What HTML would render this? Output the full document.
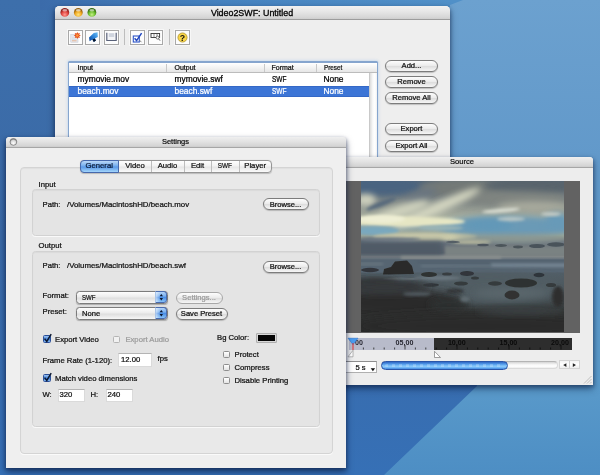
<!DOCTYPE html>
<html><head><meta charset="utf-8"><title>Video2SWF</title>
<style>
html,body{margin:0;padding:0;}
body{width:600px;height:475px;overflow:hidden;position:relative;background:#3a6aa8;font-family:"Liberation Sans",sans-serif;font-size:7.7px;color:#111;}
#stage{position:absolute;left:0;top:0;width:600px;height:475px;overflow:hidden;will-change:transform;}
#stage div,#stage span,#stage svg{position:absolute;}
.t{white-space:pre;line-height:10px;height:10px;-webkit-text-stroke:0.24px currentColor;}
.win{background:#eeeeee;}
.btn{height:10.1px;border:0.8px solid #7c7c7c;border-radius:6px;background:linear-gradient(#fdfdfd 0%,#ececec 45%,#dedede 55%,#f6f6f6 100%);box-shadow:0 0.8px 1px rgba(0,0,0,.25);}
.btn span{-webkit-text-stroke:0.24px currentColor;left:0;right:0;text-align:center;top:0;line-height:10.100px;font-size:7.6px;white-space:pre;}
.field{background:#fff;border:1px solid #dadada;border-top-color:#b4b4b4;box-sizing:border-box;}
.cb{width:7px;height:7px;border:0.8px solid #8e8e8e;border-radius:1.5px;background:linear-gradient(#fff,#e4e4e4);box-sizing:border-box;}
.cbon{width:8px;height:8px;border:0.8px solid #2a4f9a;border-radius:1.5px;background:linear-gradient(#9cc4f3,#3f7fd8 55%,#7fb4ef);box-sizing:border-box;}
.grp{background:#e4e4e4;border:1px solid #d2d2d2;border-radius:3.5px;box-sizing:border-box;box-shadow:0 1px 0 rgba(255,255,255,.7), inset 0 1px 1px rgba(0,0,0,.04);}
.ib{width:15px;height:15px;background:#fdfdfd;border:1px solid #a8a8a8;box-sizing:border-box;box-shadow:0 0 0 1px rgba(255,255,255,.5);}
</style></head><body>
<div id="stage">
<!-- BACKGROUND -->
<svg id="bg" width="600" height="475" viewBox="0 0 600 475" style="left:0;top:0">
<defs>
<linearGradient id="bgR" x1="0" y1="0" x2="0" y2="1"><stop offset="0" stop-color="#6ca1cf"/><stop offset="0.33" stop-color="#6299ca"/><stop offset="0.8" stop-color="#5a9aca"/><stop offset="1" stop-color="#4d8ec4"/></linearGradient>
<linearGradient id="bgL" x1="0" y1="0" x2="0" y2="1"><stop offset="0" stop-color="#3d6fab"/><stop offset="0.5" stop-color="#3a69a6"/><stop offset="1" stop-color="#3670b6"/></linearGradient>
<linearGradient id="bgT" x1="40" y1="0" x2="450" y2="0" gradientUnits="userSpaceOnUse"><stop offset="0" stop-color="#3b6baa"/><stop offset="0.4" stop-color="#4581be"/><stop offset="1" stop-color="#5090c8"/></linearGradient>
</defs>
<rect width="600" height="475" fill="url(#bgL)"/>
<polygon points="40,0 464,0 452,10 40,10" fill="url(#bgT)"/>
<polygon points="463,0 600,0 600,475 384,475 477,386 450,157 450,5" fill="url(#bgR)"/>
</svg>
<!-- MAIN WINDOW -->
<div id="mainwin" class="win" style="left:54.5px;top:6px;width:395px;height:170px;border-radius:4.5px 4.5px 0 0;box-shadow:0 4px 7px 0 rgba(10,25,60,.5),0 1.500px 3.500px .5px rgba(10,25,60,.3);">
  <div style="left:0;top:0;width:395px;height:12.5px;border-radius:4.5px 4.5px 0 0;background:linear-gradient(#f1f1f1 0%,#e7e7e7 40%,#d7d7d7 85%,#cdcdcd 100%);border-bottom:1px solid #9c9c9c;"></div>
  <svg width="50" height="14" viewBox="0 0 50 14" style="left:0;top:0">
    <defs>
      <radialGradient id="tr" cx="0.5" cy="0.75" r="0.6"><stop offset="0" stop-color="#ff9a90"/><stop offset="0.6" stop-color="#e0443e"/><stop offset="1" stop-color="#8e1f1c"/></radialGradient>
      <radialGradient id="ty" cx="0.5" cy="0.75" r="0.6"><stop offset="0" stop-color="#ffe27a"/><stop offset="0.6" stop-color="#f0a81e"/><stop offset="1" stop-color="#96600c"/></radialGradient>
      <radialGradient id="tg" cx="0.5" cy="0.75" r="0.6"><stop offset="0" stop-color="#c6f08a"/><stop offset="0.6" stop-color="#6cbf2c"/><stop offset="1" stop-color="#356d12"/></radialGradient>
    </defs>
    <circle cx="9.8" cy="6.4" r="4.4" fill="url(#tr)"/><ellipse cx="9.8" cy="4.3" rx="2.4" ry="1.3" fill="#fff" opacity=".55"/>
    <circle cx="23.3" cy="6.4" r="4.4" fill="url(#ty)"/><ellipse cx="23.3" cy="4.3" rx="2.4" ry="1.3" fill="#fff" opacity=".6"/>
    <circle cx="36.9" cy="6.4" r="4.4" fill="url(#tg)"/><ellipse cx="36.9" cy="4.3" rx="2.4" ry="1.3" fill="#fff" opacity=".55"/>
  </svg>
  <span class="t" style="left:97.5px;width:200px;text-align:center;top:1.5px;font-size:8.9px;color:#000;-webkit-text-stroke:0.3px #000;">Video2SWF: Untitled</span>

  <!-- toolbar -->
  <div class="ib" style="left:13.2px;top:23.7px;">
    <svg width="13" height="13" viewBox="0 0 13 13" style="left:0;top:0"><rect x="1.800" y="3.400" width="7.200" height="7.800" fill="#e4e7ee" stroke="#c2c6d0" stroke-width=".5"/><path d="M3 9.800h4.600" stroke="#e9a070" stroke-width=".7"/><path d="M3 8.300h4.600M3 6.800h2.500" stroke="#cdd0d8" stroke-width=".5"/><path d="M8.300 0.900l.8 1.700 1.800-.7-.7 1.800 1.700.8-1.700.8.700 1.800-1.800-.7-.8 1.700-.8-1.700-1.800.7.700-1.800-1.700-.8 1.700-.8-.7-1.800 1.800.7z" fill="#e6501a"/><circle cx="8.300" cy="4.500" r="1.300" fill="#ff9a3c"/></svg>
  </div>
  <div class="ib" style="left:30.6px;top:23.7px;">
    <svg width="13" height="13" viewBox="0 0 13 13" style="left:0;top:0"><defs><linearGradient id="ar" x1="1" y1="0" x2="0" y2="1"><stop offset="0" stop-color="#6cc0f6"/><stop offset=".5" stop-color="#2a80d6"/><stop offset="1" stop-color="#0e3f8c"/></linearGradient></defs><path d="M11.600 1.300 L7.800 2 L3 6.400 L3.600 10.200 L6.400 8.600 L7.800 11 L10 9.600 L8.800 7.400 L11.800 6 Z" fill="url(#ar)"/><path d="M6.400 8.600 L7.800 11 L10 9.600 L8.800 7.400 Z" fill="#08152c"/></svg>
  </div>
  <div class="ib" style="left:49.200px;top:23.7px;">
    <svg width="13" height="13" viewBox="0 0 13 13" style="left:0;top:0"><rect x="1.600" y="2" width="9.800" height="8" fill="#f3f4f7"/><rect x="3.800" y="2.200" width="5.400" height="3.800" fill="#cfd4de"/><path d="M1.800 1.800v7.700h9.400v-7.700" fill="none" stroke="#596179" stroke-width="1.150"/></svg>
  </div>
  <div style="left:69.5px;top:23.2px;width:1px;height:16px;background:#bdbdbd;"></div>
  <div class="ib" style="left:75.6px;top:23.7px;">
    <svg width="13" height="13" viewBox="0 0 13 13" style="left:0;top:0"><rect x="2.3" y="5" width="6" height="6" fill="#fff" stroke="#2c55c8" stroke-width="1.1"/><path d="M3.6 7.2 L5.6 9.6 L10.6 2.2" fill="none" stroke="#2348c0" stroke-width="1.5"/><path d="M8.6 9.2 L10.4 11.2" stroke="#777" stroke-width=".9"/></svg>
  </div>
  <div class="ib" style="left:93.6px;top:23.7px;">
    <svg width="13" height="13" viewBox="0 0 13 13" style="left:0;top:0"><rect x="2" y="2.5" width="8.6" height="4" fill="#fff" stroke="#333" stroke-width=".9"/><path d="M5 2.5v4M8 2.5v4" stroke="#555" stroke-width=".7"/><circle cx="8.6" cy="6.6" r="1.5" fill="#fff" stroke="#444" stroke-width=".7"/><path d="M9.6 7.8 L11 9.6" stroke="#444" stroke-width=".9"/></svg>
  </div>
  <div style="left:114.5px;top:23.2px;width:1px;height:16px;background:#bdbdbd;"></div>
  <div class="ib" style="left:120.6px;top:23.7px;">
    <svg width="13" height="13" viewBox="0 0 13 13" style="left:0;top:0"><circle cx="6.5" cy="6.5" r="4.6" fill="#f8d548" stroke="#a8881c" stroke-width=".7"/><text x="6.5" y="9.700" text-anchor="middle" font-family="Liberation Sans, sans-serif" font-weight="bold" font-size="8.8" fill="#111">?</text></svg>
  </div>

  <!-- list -->
  <div style="left:13.2px;top:55.400px;width:310.800px;height:120px;border-radius:1.5px;background:#86a5ce;box-shadow:0 0 2.5px 1px rgba(160,195,235,.4);"></div>
  <div style="left:14.5px;top:56.700px;width:308.200px;height:118px;background:#fff;"></div>
  <div style="left:14.5px;top:56.700px;width:308.200px;height:9.300px;background:linear-gradient(#ffffff,#f3f3f3 50%,#e6e6e6);border-bottom:1px solid #bcbcbc;"></div>
  <div style="left:111.5px;top:57.500px;width:1px;height:8.500px;background:#c8c8c8;"></div>
  <div style="left:209.600px;top:57.500px;width:1px;height:8.500px;background:#c8c8c8;"></div>
  <div style="left:261px;top:57.500px;width:1px;height:8.500px;background:#c8c8c8;"></div>
  <span class="t" style="left:23px;top:56.8px;font-size:7px;">Input</span>
  <span class="t" style="left:120px;top:56.8px;font-size:7px;">Output</span>
  <span class="t" style="left:217px;top:56.8px;font-size:7px;">Format</span>
  <span class="t" style="left:269px;top:56.8px;font-size:7px;transform:scaleX(.9);transform-origin:0 50%;">Preset</span>
  <!-- scrollbar -->
  <div style="left:314px;top:67px;width:8.700px;height:108px;background:linear-gradient(90deg,#dcdcdc,#f8f8f8 40%,#ffffff 70%,#f0f0f0);border-left:1px solid #c9c9c9;box-sizing:border-box;"></div>
  <!-- rows -->
  <span class="t" style="left:23px;top:68.3px;font-size:8.4px;color:#000;">mymovie.mov</span>
  <span class="t" style="left:120px;top:68.3px;font-size:8.4px;color:#000;">mymovie.swf</span>
  <span class="t" style="left:217px;top:68.3px;font-size:8.4px;color:#000;transform:scaleX(.78);transform-origin:0 50%;">SWF</span>
  <span class="t" style="left:269px;top:68.3px;font-size:8.4px;color:#000;">None</span>
  <div style="left:14.5px;top:79.8px;width:299.500px;height:11.400px;background:#3c75d6;box-shadow:inset 0 1px 0 #3468c6,inset 0 -1px 0 #3468c6;"></div>
  <span class="t" style="left:23px;top:80.3px;font-size:8.4px;color:#fff;">beach.mov</span>
  <span class="t" style="left:120px;top:80.3px;font-size:8.4px;color:#fff;">beach.swf</span>
  <span class="t" style="left:217px;top:80.3px;font-size:8.4px;color:#fff;transform:scaleX(.78);transform-origin:0 50%;">SWF</span>
  <span class="t" style="left:269px;top:80.3px;font-size:8.4px;color:#fff;">None</span>

  <!-- buttons -->
  <div class="btn" style="left:330.5px;top:54.0px;width:51px;"><span>Add...</span></div>
  <div class="btn" style="left:330.5px;top:70.0px;width:51px;"><span>Remove</span></div>
  <div class="btn" style="left:330.5px;top:86.0px;width:51px;"><span>Remove All</span></div>
  <div class="btn" style="left:330.5px;top:117.400px;width:51px;"><span>Export</span></div>
  <div class="btn" style="left:330.5px;top:133.700px;width:51px;"><span>Export All</span></div>
</div>
<!-- SOURCE WINDOW -->
<div id="srcwin" class="win" style="left:331px;top:157px;width:262px;height:228px;background:#ededed;border-radius:3.5px 3.5px 0 0;box-shadow:0 4px 7px 0 rgba(10,25,60,.5),0 1.500px 3.500px .5px rgba(10,25,60,.3);">
  <div style="left:0;top:0;width:262px;height:10px;border-radius:3.5px 3.5px 0 0;background:linear-gradient(#efefef 0%,#e3e3e3 45%,#d4d4d4 90%,#cacaca 100%);border-bottom:1px solid #a6a6a6;"></div>
  <span class="t" style="left:81px;width:100px;text-align:center;top:0.2px;font-size:7.6px;color:#111;">Source</span>
  <!-- video area -->
  <div style="left:14px;top:24px;width:234.5px;height:151.5px;background:#626262;"></div>
  <svg width="203" height="151" viewBox="0 0 203 151" style="left:30px;top:24.3px" preserveAspectRatio="none">
    <defs>
      <linearGradient id="sky" x1="0" y1="0" x2="0" y2="151" gradientUnits="userSpaceOnUse">
        <stop offset="0" stop-color="#536577"/><stop offset="0.07" stop-color="#69747b"/><stop offset="0.15" stop-color="#858c89"/><stop offset="0.24" stop-color="#a9af9f"/><stop offset="0.30" stop-color="#8da5ab"/><stop offset="0.36" stop-color="#a2a995"/><stop offset="0.40" stop-color="#69747f"/><stop offset="0.475" stop-color="#58626c"/><stop offset="0.50" stop-color="#82888a"/><stop offset="0.525" stop-color="#596875"/><stop offset="0.60" stop-color="#525f68"/><stop offset="0.70" stop-color="#4c575e"/><stop offset="0.80" stop-color="#40484b"/><stop offset="0.87" stop-color="#313433"/><stop offset="1" stop-color="#272827"/>
      </linearGradient>
      <filter id="b1" x="-30%" y="-50%" width="160%" height="200%"><feGaussianBlur stdDeviation="0.7"/></filter>
      <filter id="b2" x="-30%" y="-50%" width="160%" height="200%"><feGaussianBlur stdDeviation="1.800"/></filter>
      <filter id="b3" x="-30%" y="-50%" width="160%" height="200%"><feGaussianBlur stdDeviation="3"/></filter>
      <filter id="b5" x="-30%" y="-50%" width="160%" height="200%"><feGaussianBlur stdDeviation="5"/></filter>
      <clipPath id="vc"><rect width="203" height="151"/></clipPath>
    </defs>
    <rect width="203" height="151" fill="url(#sky)"/>
    <g clip-path="url(#vc)">
      <!-- top band -->
      <ellipse cx="22" cy="5" rx="38" ry="10" fill="#4a6380" filter="url(#b3)"/>
      <ellipse cx="104" cy="7" rx="44" ry="10" fill="#737977" filter="url(#b3)"/>
      <ellipse cx="170" cy="5" rx="46" ry="9" fill="#59646c" filter="url(#b3)"/>
      <ellipse cx="150" cy="17" rx="56" ry="7" fill="#7f8480" filter="url(#b3)"/>
      <ellipse cx="60" cy="14" rx="16" ry="5" fill="#6a7680" filter="url(#b3)" transform="rotate(-20 60 14)"/>
      <!-- right cloud -->
      <ellipse cx="172" cy="26" rx="36" ry="6" fill="#a6a89b" filter="url(#b3)"/>
      <!-- blue sky right -->
      <ellipse cx="146" cy="46" rx="68" ry="11" fill="#6a9ab6" filter="url(#b3)"/>
      <ellipse cx="128" cy="44" rx="24" ry="6" fill="#6298b8" filter="url(#b3)"/>
      <ellipse cx="196" cy="40" rx="12" ry="8" fill="#689ab8" filter="url(#b3)"/>
      <!-- cream streak + band -->
      <ellipse cx="76" cy="27" rx="48" ry="5.500" fill="#d3d5c0" filter="url(#b3)" transform="rotate(-24 76 27)"/>
      <ellipse cx="40" cy="30" rx="30" ry="6" fill="#cdd0bc" filter="url(#b3)" transform="rotate(-18 40 30)"/>
      <ellipse cx="44" cy="40.500" rx="60" ry="5" fill="#e6e6c4" filter="url(#b2)"/>
      <ellipse cx="20" cy="38" rx="24" ry="4" fill="#eeeed4" filter="url(#b2)"/>
      <ellipse cx="5" cy="19" rx="10" ry="6" fill="#cfd1be" filter="url(#b3)"/>
      <ellipse cx="20" cy="23" rx="16" ry="2.600" fill="#56697c" filter="url(#b2)" transform="rotate(-22 20 23)"/>
      <!-- white edge of right cloud -->
      <ellipse cx="140" cy="29.500" rx="19" ry="2" fill="#d9ddd2" filter="url(#b2)" transform="rotate(-5 140 29.5)"/>
      <ellipse cx="190" cy="33" rx="10" ry="2" fill="#c3cac4" filter="url(#b2)"/>
      <ellipse cx="150" cy="38" rx="14" ry="2.200" fill="#b6c4c4" filter="url(#b2)"/>
      <!-- left blue patch -->
      <ellipse cx="14" cy="50" rx="24" ry="4.400" fill="#79a8be" filter="url(#b2)"/>
      <ellipse cx="80" cy="47" rx="22" ry="2.400" fill="#9ab4b6" filter="url(#b2)"/>
      <!-- cream haze band -->
      <ellipse cx="64" cy="56" rx="52" ry="4" fill="#cbcbaa" filter="url(#b2)"/>
      <ellipse cx="150" cy="58" rx="56" ry="4" fill="#8e9890" filter="url(#b3)"/>
      <ellipse cx="110" cy="61" rx="20" ry="2" fill="#b4b59c" filter="url(#b2)"/>
      <!-- dark band above horizon -->
      <rect x="-6" y="60" width="88" height="15" fill="#505a66" filter="url(#b3)"/>
      <rect x="84" y="65" width="130" height="10" fill="#7a8282" filter="url(#b2)"/>
      <ellipse cx="30" cy="58.500" rx="30" ry="2" fill="#6a7682" filter="url(#b2)"/>
      <!-- dark cloud dots -->
      <ellipse cx="92" cy="61" rx="7" ry="1.200" fill="#555e66" filter="url(#b1)"/>
      <ellipse cx="122" cy="64" rx="6" ry="1.300" fill="#4e575e" filter="url(#b1)"/>
      <ellipse cx="140" cy="64.500" rx="6" ry="1.400" fill="#4b545a" filter="url(#b1)"/>
      <ellipse cx="157" cy="66" rx="5" ry="1.400" fill="#4b545a" filter="url(#b1)"/>
      <ellipse cx="176" cy="65" rx="8" ry="2" fill="#48525a" filter="url(#b1)"/>
      <ellipse cx="195" cy="63.500" rx="9" ry="2.200" fill="#48525a" filter="url(#b1)"/>
      <!-- horizon & sea -->
      <rect x="40" y="75.300" width="100" height="3" fill="#8b908f" filter="url(#b2)"/>
      <rect x="-6" y="78.500" width="215" height="13" fill="#566572" filter="url(#b1)"/>
      <rect x="56" y="80" width="150" height="1.600" fill="#505e6c" filter="url(#b2)"/>
      <rect x="130" y="82.500" width="80" height="3.400" fill="#788896" filter="url(#b2)"/>
      <rect x="60" y="84" width="70" height="2" fill="#687884" filter="url(#b2)"/>
      <rect x="-6" y="82" width="28" height="2" fill="#6d7a84" filter="url(#b2)"/>
      <!-- mid water -->
      <ellipse cx="128" cy="108" rx="76" ry="15" fill="#515d64" filter="url(#b5)"/>
      <ellipse cx="150" cy="112" rx="36" ry="5" fill="#5a666c" filter="url(#b3)"/>
      <ellipse cx="76" cy="97" rx="24" ry="1.800" fill="#707c84" filter="url(#b2)"/>
      <ellipse cx="40" cy="98" rx="18" ry="1.400" fill="#68747c" filter="url(#b1)"/>
      <!-- rocks -->
      <path d="M22 93.500 L23 88 L30 86 L34 80.500 L46 79.500 L51 85 L53 93 Z" fill="#2b2b29" filter="url(#b1)"/>
      <ellipse cx="9" cy="89" rx="9" ry="2.200" fill="#31353b" filter="url(#b1)"/>
      <ellipse cx="68" cy="93.500" rx="8" ry="2.400" fill="#2f3130" filter="url(#b1)"/>
      <ellipse cx="86" cy="93" rx="5" ry="1.600" fill="#383d40" filter="url(#b1)"/>
      <ellipse cx="106" cy="92.500" rx="7" ry="2.600" fill="#30343a" filter="url(#b1)"/>
      <ellipse cx="114" cy="97" rx="4" ry="1.600" fill="#343a3e" filter="url(#b1)"/>
      <ellipse cx="178" cy="94" rx="5.500" ry="2.200" fill="#2f343a" filter="url(#b1)"/>
      <ellipse cx="100" cy="102.500" rx="7" ry="2" fill="#353a3c" filter="url(#b1)"/>
      <ellipse cx="134" cy="102.500" rx="7" ry="2.200" fill="#363b3d" filter="url(#b1)"/>
      <ellipse cx="160" cy="102" rx="16" ry="4.600" fill="#2f3231" filter="url(#b1)"/>
      <ellipse cx="190" cy="104" rx="5" ry="2" fill="#353a3c" filter="url(#b1)"/>
      <ellipse cx="151" cy="114" rx="7.500" ry="4.400" fill="#303332" filter="url(#b1)"/>
      <ellipse cx="197" cy="116" rx="6" ry="11" fill="#2d2f2f" filter="url(#b2)"/>
      <ellipse cx="94" cy="110" rx="9" ry="2.600" fill="#34383a" filter="url(#b2)"/>
      <ellipse cx="70" cy="104" rx="8" ry="1.800" fill="#33383c" filter="url(#b1)"/>
      <ellipse cx="12" cy="102" rx="24" ry="5" fill="#2e3030" filter="url(#b3)"/>
      <ellipse cx="44" cy="105" rx="12" ry="2.600" fill="#30333a" filter="url(#b2)"/>
      <ellipse cx="34" cy="122" rx="68" ry="15" fill="#2b2c2b" filter="url(#b5)"/>
      <ellipse cx="24" cy="106" rx="44" ry="7" fill="#34383a" filter="url(#b3)"/>
      <ellipse cx="88" cy="124" rx="20" ry="6" fill="#2e3031" filter="url(#b3)"/>
      <ellipse cx="56" cy="113" rx="14" ry="1.600" fill="#59646a" filter="url(#b2)"/>
      <ellipse cx="104" cy="118" rx="5" ry="3" fill="#5e6a70" filter="url(#b2)"/>
      <ellipse cx="120" cy="145" rx="130" ry="13" fill="#2a2b2a" filter="url(#b5)"/>
      <ellipse cx="160" cy="130" rx="44" ry="4" fill="#3a4042" filter="url(#b3)"/>
    </g>
  </svg>
  <!-- timeline -->
  <div style="left:18px;top:181px;width:85px;height:11.500px;background:#b8bbca;"></div>
  <div style="left:103px;top:181px;width:138px;height:11.500px;background:#2d2d2d;"></div>
  <svg width="262" height="30" viewBox="0 0 262 30" style="left:0;top:176px">
    <g stroke="#222" stroke-width="0.8">
      <path d="M32.4 14.500v2M42.8 14.500v2M53.2 14.500v2M63.6 14.500v2M74 12v4.5M84.400 14.500v2M94.8 14.500v2"/>
    </g>
    <g stroke="#000" stroke-width="0.8" opacity=".8">
      <path d="M105.200 14.500v2M115.600 14.500v2M126 12v4.500M136.400 14.500v2M146.800 14.500v2M157.200 14.500v2M167.600 14.500v2M178 12v4.500M188.400 14.500v2M198.800 14.500v2M209.200 14.500v2M219.600 14.500v2M230 12v4.500"/>
    </g>
    <g font-family="Liberation Sans, sans-serif" font-size="7.1" font-weight="bold" fill="#2a2a33">
      <text x="24" y="11.900">00</text>
      <text x="73.500" y="11.900" text-anchor="middle">05,00</text>
    </g>
    <g font-family="Liberation Sans, sans-serif" font-size="7.1" font-weight="bold" fill="#0a0a0a">
      <text x="125.800" y="11.900" text-anchor="middle">10,00</text>
      <text x="177.400" y="11.900" text-anchor="middle">15,00</text>
      <text x="229" y="11.900" text-anchor="middle">20,00</text>
    </g>
    <!-- playhead -->
    <path d="M17 5.200h10l-5 6.500z" fill="#4a9df0" stroke="#2a6fc8" stroke-width=".5"/>
    <path d="M22 10v7" stroke="#e03030" stroke-width="1"/>
    <path d="M22 17.300l-5 6.500h5z" fill="#fff" stroke="#8a8a8a" stroke-width=".6"/>
    <path d="M103.500 18.300v6.200h6z" fill="#fff" stroke="#777" stroke-width=".7"/>
  </svg>
  <!-- zoom popup -->
  <div style="left:10px;top:204px;width:36px;height:11.500px;background:#fff;border:1px solid #b0b0b0;border-top-color:#8e8e8e;box-sizing:border-box;"></div>
  <span class="t" style="left:24.500px;top:205.500px;font-size:7.6px;color:#111;">5 s</span>
  <svg width="6" height="4" viewBox="0 0 6 4" style="left:39px;top:211px"><path d="M0.700 0.300h4.400l-2.200 3z" fill="#111"/></svg>
  <!-- scrollbar -->
  <div style="left:50px;top:203.600px;width:177px;height:8.400px;border-radius:4.500px;background:linear-gradient(#d4d4d4,#f4f4f4 40%,#ffffff 70%,#ececec);border:0.600px solid #dadada;border-top-color:#b4b4b4;box-sizing:border-box;"></div>
  <div style="left:50px;top:204px;width:127px;height:8.500px;border-radius:4.500px;background:linear-gradient(#2e66c4 0%,#5aa2ee 35%,#8ecbfb 60%,#69b0f4 85%,#3d7dd8 100%);border:0.700px solid #2a55a8;box-sizing:border-box;"></div>
  <div style="left:54px;top:206.500px;width:119px;height:3.500px;border-radius:2px;background:repeating-linear-gradient(90deg,rgba(255,255,255,.2) 0,rgba(255,255,255,.2) 3px,rgba(255,255,255,0) 3.500px,rgba(255,255,255,0) 6.500px,rgba(255,255,255,.2) 7px);"></div>
  <div style="left:227.500px;top:203.400px;width:21.500px;height:8.200px;background:linear-gradient(#f4f4f4,#ffffff 50%,#ececec);border:0.600px solid #d4d4d4;box-sizing:border-box;"></div>
  <div style="left:238px;top:204px;width:0.600px;height:7px;background:#d0d0d0;"></div>
  <svg width="22" height="8" viewBox="0 0 22 8" style="left:227px;top:203.500px"><path d="M8.400 2.200v3.800l-3.200-1.900z" fill="#222"/><path d="M14.800 2.200v3.800l3.200-1.900z" fill="#222"/></svg>
  <!-- grip -->
  <svg width="9" height="9" viewBox="0 0 9 9" style="left:252px;top:218px"><path d="M8.500 1L1 8.500M8.500 4L4 8.500M8.500 7L7 8.500" stroke="#b4b4b4" stroke-width=".8"/></svg>
</div>
<!-- SETTINGS WINDOW -->
<div id="setwin" class="win" style="left:6px;top:137px;width:339.5px;height:330.600px;background:#efefef;border-radius:3.5px 3.5px 0 0;box-shadow:0 4px 7px 0 rgba(8,20,55,.55),0 1.500px 3.500px .5px rgba(8,20,55,.3);">
  <div style="left:0;top:0;width:339.5px;height:10px;border-radius:3.5px 3.5px 0 0;background:linear-gradient(#efefef 0%,#e3e3e3 45%,#d4d4d4 90%,#cacaca 100%);border-bottom:1px solid #a6a6a6;"></div>
  <svg width="14" height="10" viewBox="0 0 14 10" style="left:2px;top:0"><defs><radialGradient id="cg" cx=".5" cy=".7" r=".6"><stop offset="0" stop-color="#ffffff"/><stop offset=".7" stop-color="#d8d8d8"/><stop offset="1" stop-color="#8a8a8a"/></radialGradient></defs><circle cx="5.4" cy="4.9" r="3.4" fill="url(#cg)" stroke="#6f6f6f" stroke-width=".7"/></svg>
  <span class="t" style="left:119.5px;width:100px;text-align:center;top:0.4px;font-size:7.5px;color:#111;">Settings</span>

  <!-- tab panel -->
  <div class="grp" style="left:13.5px;top:30px;width:313.700px;height:286.5px;background:#e9e9e9;border-color:#d4d4d4;border-radius:4px;"></div>
  <!-- tabs -->
  <div style="left:73.5px;top:23px;width:192.400px;height:12.500px;border-radius:4px;background:linear-gradient(#fefefe 0%,#f2f2f2 45%,#e6e6e6 55%,#fafafa 100%);border:0.800px solid #959595;box-sizing:border-box;box-shadow:0 .8px 1px rgba(0,0,0,.2);"></div>
  <div style="left:73.5px;top:23px;width:39.500px;height:12.500px;border-radius:4px 0 0 4px;background:linear-gradient(#bcd8f7 0%,#7cb2ef 40%,#5a99e8 55%,#a4d6fb 100%);border:0.800px solid #4668ac;box-sizing:border-box;"></div>
  <div style="left:145px;top:24px;width:.7px;height:10.500px;background:#bdbdbd;"></div>
  <div style="left:178px;top:24px;width:.7px;height:10.500px;background:#bdbdbd;"></div>
  <div style="left:205px;top:24px;width:.7px;height:10.500px;background:#bdbdbd;"></div>
  <div style="left:232.500px;top:24px;width:.7px;height:10.500px;background:#bdbdbd;"></div>
  <span class="t" style="left:73.5px;width:39.500px;text-align:center;top:24.300px;font-size:7.7px;color:#0a1a3a;">General</span>
  <span class="t" style="left:113px;width:32px;text-align:center;top:24.300px;font-size:7.7px;">Video</span>
  <span class="t" style="left:145px;width:33px;text-align:center;top:24.300px;font-size:7.7px;">Audio</span>
  <span class="t" style="left:178px;width:27px;text-align:center;top:24.300px;font-size:7.7px;">Edit</span>
  <span class="t" style="left:205px;width:27.500px;text-align:center;top:24.300px;font-size:7.7px;transform:scaleX(.83);">SWF</span>
  <span class="t" style="left:232.700px;width:33px;text-align:center;top:24.300px;font-size:7.7px;">Player</span>

  <!-- Input group -->
  <span class="t" style="left:32.500px;top:42.500px;">Input</span>
  <div class="grp" style="left:26px;top:52.200px;width:288.200px;height:47.300px;"></div>
  <span class="t" style="left:36.500px;top:62.500px;">Path:</span>
  <span class="t" style="left:61px;top:62.500px;font-size:7.850px;">/Volumes/MacintoshHD/beach.mov</span>
  <div class="btn" style="left:256.500px;top:61px;width:44px;"><span style="top:0.800px">Browse...</span></div>

  <!-- Output group -->
  <span class="t" style="left:32.500px;top:104px;">Output</span>
  <div class="grp" style="left:26px;top:114.200px;width:288.200px;height:175.800px;"></div>
  <span class="t" style="left:36.500px;top:123.500px;">Path:</span>
  <span class="t" style="left:61px;top:123.500px;font-size:7.850px;">/Volumes/MacintoshHD/beach.swf</span>
  <div class="btn" style="left:256.500px;top:124px;width:44px;"><span>Browse...</span></div>

  <span class="t" style="left:36.500px;top:154px;">Format:</span>
  <div class="btn" style="left:70.300px;top:154.300px;width:89.500px;height:10.600px;border-radius:3.500px;"></div>
  <div style="left:148.500px;top:154.300px;width:12.900px;height:12.200px;border-radius:0 3.500px 3.500px 0;background:linear-gradient(90deg,rgba(255,255,255,.55),rgba(255,255,255,0) 45%),linear-gradient(#b4d4f8 0%,#79b0f0 40%,#4a8ee6 55%,#86c2f8 100%);border:0.800px solid #4a6cb0;border-left-color:#a8c4e8;box-sizing:border-box;"></div>
  <svg width="13" height="12" viewBox="0 0 13 12" style="left:148.500px;top:154.300px"><path d="M6.300 3l1.700 2.300h-3.400z M6.300 9.400l1.700-2.300h-3.400z" fill="#0a1630"/></svg>
  <span class="t" style="left:76px;top:156.300px;font-size:7.600px;transform:scaleX(.8);transform-origin:0 50%;">SWF</span>

  <span class="t" style="left:36.500px;top:170px;">Preset:</span>
  <div class="btn" style="left:70.300px;top:170.300px;width:89.500px;height:10.600px;border-radius:3.500px;"></div>
  <div style="left:148.500px;top:170.300px;width:12.900px;height:12.200px;border-radius:0 3.500px 3.500px 0;background:linear-gradient(90deg,rgba(255,255,255,.55),rgba(255,255,255,0) 45%),linear-gradient(#b4d4f8 0%,#79b0f0 40%,#4a8ee6 55%,#86c2f8 100%);border:0.800px solid #4a6cb0;border-left-color:#a8c4e8;box-sizing:border-box;"></div>
  <svg width="13" height="12" viewBox="0 0 13 12" style="left:148.500px;top:170.300px"><path d="M6.300 3l1.700 2.300h-3.400z M6.300 9.400l1.700-2.300h-3.400z" fill="#0a1630"/></svg>
  <span class="t" style="left:76px;top:172.300px;font-size:7.600px;">None</span>

  <div class="btn" style="left:169.500px;top:154.900px;width:45px;border-color:#a8a8a8;box-shadow:none;"><span style="color:#9a9a9a">Settings...</span></div>
  <div class="btn" style="left:169.500px;top:170.900px;width:50px;"><span>Save Preset</span></div>

  <!-- checkboxes -->
  <div class="cbon" style="left:36.500px;top:198px;"></div>
  <svg width="12" height="12" viewBox="0 0 12 12" style="left:35.500px;top:194.500px"><path d="M2.600 6.600l2.200 2.900l4.400-7.300" fill="none" stroke="#0c1830" stroke-width="1.500"/></svg>
  <span class="t" style="left:49px;top:197.500px;">Export Video</span>
  <div class="cb" style="left:107px;top:198.500px;border-color:#b4b4b4;background:#f1f1f1;"></div>
  <span class="t" style="left:119.400px;top:197.500px;color:#9c9c9c;">Export Audio</span>

  <span class="t" style="left:211px;top:195.500px;">Bg Color:</span>
  <div style="left:251px;top:196.600px;width:19px;height:8px;background:#050505;border:1.500px solid #d8d8d8;box-sizing:border-box;box-shadow:0 0 0 .6px #8c8c8c;"></div>

  <span class="t" style="left:36.500px;top:218.500px;">Frame Rate (1-120):</span>
  <div class="field" style="left:112px;top:215.500px;width:34px;height:14px;"></div>
  <span class="t" style="left:115px;top:217.500px;">12.00</span>
  <span class="t" style="left:151.500px;top:217.300px;">fps</span>

  <div class="cb" style="left:217px;top:214px;"></div>
  <span class="t" style="left:228.500px;top:212.500px;">Protect</span>
  <div class="cb" style="left:217px;top:227px;"></div>
  <span class="t" style="left:228.500px;top:225.500px;">Compress</span>
  <div class="cb" style="left:217px;top:239.800px;"></div>
  <span class="t" style="left:228.500px;top:238.500px;">Disable Printing</span>

  <div class="cbon" style="left:36.500px;top:237.400px;"></div>
  <svg width="12" height="12" viewBox="0 0 12 12" style="left:35.500px;top:233.900px"><path d="M2.600 6.600l2.200 2.900l4.400-7.300" fill="none" stroke="#0c1830" stroke-width="1.500"/></svg>
  <span class="t" style="left:49px;top:236.500px;">Match video dimensions</span>

  <span class="t" style="left:36.500px;top:252.500px;">W:</span>
  <div class="field" style="left:51.500px;top:252px;width:27px;height:12.600px;"></div>
  <span class="t" style="left:53.500px;top:252.600px;">320</span>
  <span class="t" style="left:84.500px;top:252.500px;">H:</span>
  <div class="field" style="left:99.500px;top:252px;width:27px;height:12.600px;"></div>
  <span class="t" style="left:101.500px;top:252.600px;">240</span>
</div>
</div>
</body></html>
